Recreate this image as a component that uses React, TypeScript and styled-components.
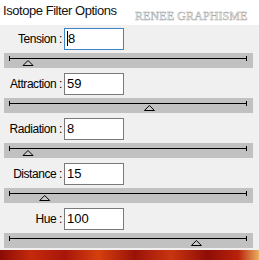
import React from "react";
import styled, { createGlobalStyle } from "styled-components";

const GlobalStyle = createGlobalStyle`
  html, body {
    margin: 0;
    padding: 0;
    background: #f0f0f0;
  }
  body {
    font-family: "Liberation Sans", Arial, sans-serif;
  }
`;

const Window = styled.div`
  width: 259px;
  height: 260px;
  overflow: hidden;
  display: flex;
  flex-direction: column;
  background: #f0f0f0;
`;

const TitleBar = styled.div`
  position: relative;
  height: 25px;
  background: #ffffff;
  flex-shrink: 0;
`;

const Title = styled.div`
  padding: 2px 0 0 3px;
  font-size: 13px;
  line-height: 18px;
  letter-spacing: -0.45px;
  color: #111;
`;

const Watermark = styled.div`
  position: absolute;
  left: 135px;
  top: 9px;
  font-family: "Liberation Serif", "Times New Roman", serif;
  font-size: 12px;
  line-height: 14px;
  color: #ffffff;
  -webkit-text-stroke: 0.45px #a8a8a8;
  text-shadow: 0 0 1px #d0d0d0;
  letter-spacing: 0.1px;
`;

const Panel = styled.div`
  padding: 3px 6px 0 4px;
  display: flex;
  flex-direction: column;
  gap: 5px;
`;

const Group = styled.div`
  display: flex;
  flex-direction: column;
  gap: 3px;
`;

const Row = styled.div`
  display: flex;
  align-items: center;
  gap: 2px;
  height: 22px;
`;

const Label = styled.div`
  width: 58px;
  text-align: right;
  font-size: 12px;
  letter-spacing: -0.45px;
  color: #000;
  white-space: nowrap;
`;

const Field = styled.div<{ $focused?: boolean }>`
  box-sizing: border-box;
  width: 60px;
  height: 22px;
  background: #fff;
  border: 1px solid ${(p) => (p.$focused ? "#3c86c8" : "#7a7a7a")};
  padding: 1px 2px 0;
  font-size: 13px;
  line-height: 17px;
  color: #000;
  display: flex;
  align-items: flex-start;
`;

const Caret = styled.span`
  display: inline-block;
  width: 1px;
  height: 15px;
  margin-top: 1px;
  background: #000;
`;

const Band = styled.div`
  height: 15px;
  background: #c1c1c1;
`;

const Strip = styled.div`
  margin-top: 2px;
  flex: 1;
  background: linear-gradient(
    90deg,
    #8c0b06 0%,
    #c42a0c 12%,
    #a8150a 25%,
    #d6400f 38%,
    #9a1207 52%,
    #c93510 66%,
    #8f0d06 80%,
    #b8220b 92%,
    #e8b060 100%
  );
`;

type Option = { label: string; value: number; max: number; focused?: boolean };

const options: Option[] = [
  { label: "Tension :", value: 8, max: 100, focused: true },
  { label: "Attraction :", value: 59, max: 100 },
  { label: "Radiation :", value: 8, max: 100 },
  { label: "Distance :", value: 15, max: 100 },
  { label: "Hue :", value: 100, max: 127 },
];

const Track = ({ value, max }: { value: number; max: number }) => {
  const x = 5 + (value / max) * 238;
  return (
    <svg width="249" height="15" viewBox="0 0 249 15">
      <line x1="5" y1="5.5" x2="243" y2="5.5" stroke="#000" strokeWidth="1" />
      <line x1="5.5" y1="3" x2="5.5" y2="8" stroke="#000" strokeWidth="1" />
      <line x1="242.5" y1="3" x2="242.5" y2="8" stroke="#000" strokeWidth="1" />
      <polygon
        points={`${x - 5},12.5 ${x},7.5 ${x + 5},12.5`}
        fill="#c8c8c8"
        stroke="#000"
        strokeWidth="1"
      />
    </svg>
  );
};

export default function App() {
  return (
    <Window>
      <GlobalStyle />
      <TitleBar>
        <Title>Isotope Filter Options</Title>
        <Watermark>RENEE GRAPHISME</Watermark>
      </TitleBar>
      <Panel>
        {options.map((o) => (
          <Group key={o.label}>
            <Row>
              <Label>{o.label}</Label>
              <Field $focused={o.focused}>
                {o.focused && <Caret />}
                {o.value}
              </Field>
            </Row>
            <Band>
              <Track value={o.value} max={o.max} />
            </Band>
          </Group>
        ))}
      </Panel>
      <Strip />
    </Window>
  );
}
